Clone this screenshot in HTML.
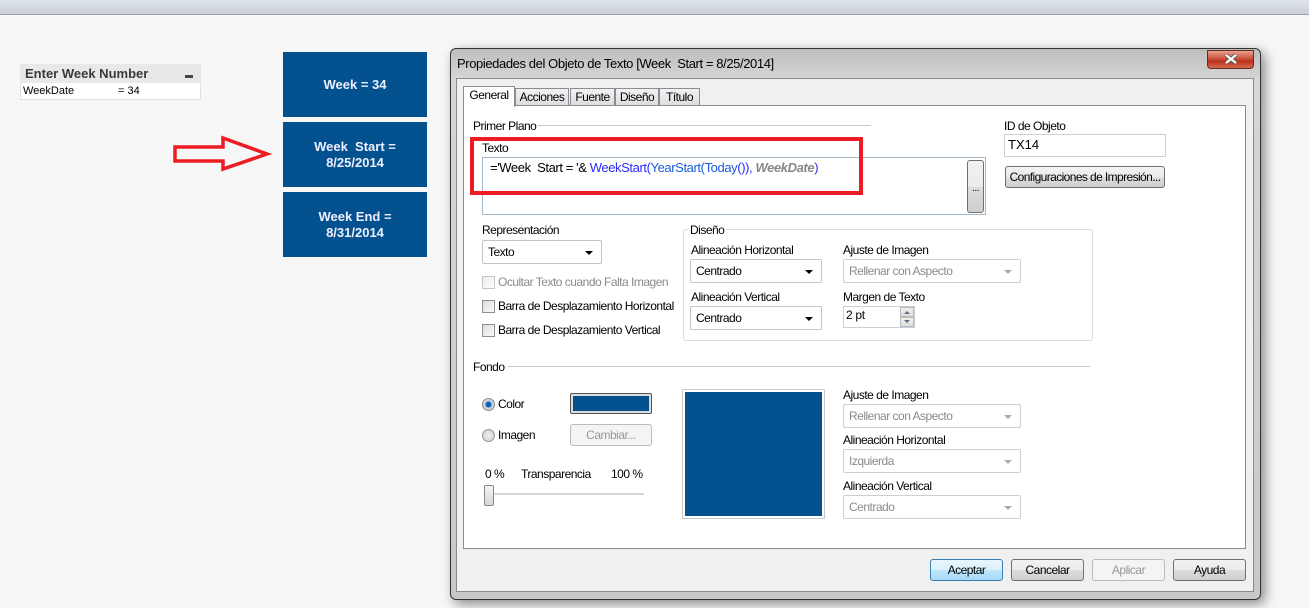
<!DOCTYPE html>
<html><head><meta charset="utf-8"><style>
*{box-sizing:border-box;margin:0;padding:0}
body{width:1309px;height:608px;position:relative;overflow:hidden;background:#f7f7f7;font-family:"Liberation Sans",sans-serif;font-size:12px;color:#000}
.a{position:absolute;white-space:nowrap}
.blue{position:absolute;left:283px;width:144px;height:65px;background:#03528f;color:#eef;font-weight:bold;font-size:13px;text-align:center;display:flex;align-items:center;justify-content:center;line-height:16px}
.t{position:absolute;white-space:nowrap;font-size:12px;letter-spacing:-0.5px;line-height:14px}
.sel{position:absolute;background:#fff;border:1px solid #c5c5c5;border-radius:2px;height:24px;padding:0 5px;line-height:22px;letter-spacing:-0.5px;white-space:nowrap}
.sel:after{content:"";position:absolute;right:8px;top:10px;border-left:4px solid transparent;border-right:4px solid transparent;border-top:4px solid #000}
.dis{color:#8a8a8a;border-color:#cfcfcf}
.dis:after{border-top-color:#aaa}
.btn{position:absolute;height:22px;border:1px solid #707070;border-radius:3px;background:linear-gradient(#f2f2f2,#ebebeb 50%,#dddddd 51%,#cfcfcf);text-align:center;line-height:20px;letter-spacing:-0.5px;white-space:nowrap;overflow:hidden}
.cb{position:absolute;width:13px;height:13px;border:1px solid #8e8f8f;background:linear-gradient(135deg,#dcdcdc,#fafafa)}
.tab{position:absolute;top:88px;height:18px;border:1px solid #898c95;border-bottom:none;background:linear-gradient(#f2f2f2,#dcdcdc);text-align:center;line-height:17px;letter-spacing:-0.5px}
</style></head><body>
<div class="a" style="left:0;top:0;width:1309px;height:15px;background:linear-gradient(#dfe4ea,#c9d0d8);border-bottom:1px solid #a0a4a8"></div>

<div class="a" style="left:20px;top:64px;width:181px;height:36px;border:1px solid #e0e0e0;background:#fff"></div>
<div class="a" style="left:20px;top:64px;width:181px;height:19px;background:#e8e8e8"></div>
<div class="a" style="left:25px;top:66px;font-weight:bold;font-size:13px;color:#3a3a3a">Enter Week Number</div>
<div class="a" style="left:185px;top:75px;width:8px;height:3px;background:#444"></div>
<div class="a" style="left:23px;top:85px;font-size:11px">WeekDate</div>
<div class="a" style="left:118px;top:85px;font-size:11px">= 34</div>

<div class="blue" style="top:52px">Week = 34</div>
<div class="blue" style="top:122px">Week&nbsp; Start =<br>8/25/2014</div>
<div class="blue" style="top:192px">Week End =<br>8/31/2014</div>

<svg class="a" style="left:170px;top:133px" width="105" height="42"><polygon points="5,14 53,14 53,5 97,21 53,36 53,28 5,28" fill="none" stroke="#ed1c24" stroke-width="3.5"/></svg>

<div class="a" style="left:450px;top:48px;width:811px;height:552px;border:1px solid #333;border-radius:6px;background:linear-gradient(#bdbdbd,#d6d6d6 30px,#c8c8c8);box-shadow:4px 4px 12px rgba(0,0,0,.45)"></div>
<div class="a" style="left:457px;top:56px;font-size:13px;letter-spacing:-0.4px">Propiedades del Objeto de Texto [Week&nbsp; Start = 8/25/2014]</div>
<div class="a" style="left:1207px;top:50px;width:47px;height:19px;border:1px solid #6b2a20;border-radius:0 0 4px 4px;background:linear-gradient(#e9a294,#c9472f 50%,#b9301b 60%,#d86a4e)"></div>
<svg class="a" style="left:1223px;top:53px" width="16" height="12"><path d="M3 2L13 10M13 2L3 10" stroke="#555" stroke-width="4"/><path d="M3 2L13 10M13 2L3 10" stroke="#fff" stroke-width="2.2"/></svg>
<div class="a" style="left:456px;top:78px;width:798px;height:514px;background:#f0f0f0;border:1px solid #8b8b8b"></div>

<div class="tab" style="left:515px;width:54px">Acciones</div>
<div class="tab" style="left:570px;width:45px">Fuente</div>
<div class="tab" style="left:615px;width:44px">Diseño</div>
<div class="tab" style="left:659px;width:41px">Título</div>
<div class="a" style="left:463px;top:105px;width:783px;height:444px;background:#fff;border:1px solid #898c95"></div>
<div class="tab" style="left:463px;top:86px;width:52px;height:21px;background:#fff;z-index:2">General</div>

<div class="t" style="left:473px;top:119px">Primer Plano</div>
<div class="a" style="left:538px;top:125px;width:333px;height:1px;background:#c8c8c8"></div>
<div class="t" style="left:482px;top:141px">Texto</div>
<div class="a" style="left:482px;top:157px;width:504px;height:58px;border:1px solid #a8b7c8;background:#fff"></div>
<div class="t" style="left:490px;top:161px;font-size:13px;letter-spacing:-0.4px">='Week&nbsp; Start = '&amp; <span style="color:#2a2aff">WeekStart(</span><span style="color:#1b5bd6">YearStart(Today</span><span style="color:#2a2aff">()),</span> <i style="color:#888;font-weight:bold">WeekDate</i><span style="color:#2a2aff">)</span></div>
<div class="btn" style="left:967px;top:160px;width:17px;height:53px;line-height:56px;font-size:10px">...</div>
<div class="a" style="left:470px;top:137px;width:393px;height:58px;border:4px solid #ed1c24"></div>

<div class="t" style="left:1004px;top:119px">ID de Objeto</div>
<div class="a" style="left:1004px;top:134px;width:162px;height:23px;border:1px solid #c8d0d8;background:#fff;padding:2px 3px;font-size:13px">TX14</div>
<div class="btn" style="left:1005px;top:166px;width:160px;font-size:12px;letter-spacing:-0.6px">Configuraciones de Impresión...</div>

<div class="t" style="left:482px;top:223px">Representación</div>
<div class="sel" style="left:482px;top:240px;width:120px">Texto</div>
<div class="cb" style="left:482px;top:276px;opacity:.5"></div><div class="t" style="left:498px;top:275px;color:#8a8a8a">Ocultar Texto cuando Falta Imagen</div>
<div class="cb" style="left:482px;top:300px"></div><div class="t" style="left:498px;top:299px">Barra de Desplazamiento Horizontal</div>
<div class="cb" style="left:482px;top:324px"></div><div class="t" style="left:498px;top:323px">Barra de Desplazamiento Vertical</div>

<div class="a" style="left:683px;top:229px;width:410px;height:112px;border:1px solid #d5dfe5;border-radius:3px"></div>
<div class="t" style="left:688px;top:223px;background:#fff;padding:0 2px">Diseño</div>
<div class="t" style="left:691px;top:243px">Alineación Horizontal</div>
<div class="sel" style="left:690px;top:259px;width:132px">Centrado</div>
<div class="t" style="left:843px;top:243px">Ajuste de Imagen</div>
<div class="sel dis" style="left:843px;top:259px;width:178px">Rellenar con Aspecto</div>
<div class="t" style="left:691px;top:290px">Alineación Vertical</div>
<div class="sel" style="left:690px;top:306px;width:132px">Centrado</div>
<div class="t" style="left:843px;top:290px">Margen de Texto</div>
<div class="a" style="left:843px;top:306px;width:72px;height:22px;border:1px solid #c8d0d8;background:#fff;padding:1px 2px;letter-spacing:-0.3px">2 pt</div>
<div class="a" style="left:900px;top:307px;width:14px;height:10px;border:1px solid #bbb;background:linear-gradient(#f0f0f0,#dcdcdc)"></div>
<div class="a" style="left:900px;top:317px;width:14px;height:10px;border:1px solid #bbb;background:linear-gradient(#f0f0f0,#dcdcdc)"></div>
<svg class="a" style="left:900px;top:307px" width="14" height="20"><path d="M4 7L7 4L10 7Z M4 13L7 16L10 13Z" fill="#5a6e8a"/></svg>

<div class="t" style="left:473px;top:360px">Fondo</div>
<div class="a" style="left:508px;top:366px;width:582px;height:1px;background:#c8c8c8"></div>
<div class="a" style="left:482px;top:398px;width:13px;height:13px;border-radius:50%;border:1px solid #888;background:radial-gradient(#0a63b0 30%,#bcd 45%,#eee)"></div>
<div class="t" style="left:498px;top:397px">Color</div>
<div class="a" style="left:570px;top:393px;width:82px;height:21px;border:1px solid #555;border-radius:2px;background:#dcdcdc;padding:2px"><div style="width:100%;height:100%;background:#03528f"></div></div>
<div class="a" style="left:482px;top:429px;width:13px;height:13px;border-radius:50%;border:1px solid #999;background:radial-gradient(#eee,#ccc)"></div>
<div class="t" style="left:498px;top:428px">Imagen</div>
<div class="btn" style="left:570px;top:424px;width:82px;color:#999;border-color:#bbb;background:#f4f4f4">Cambiar...</div>
<div class="t" style="left:485px;top:467px">0 %</div>
<div class="t" style="left:521px;top:467px">Transparencia</div>
<div class="t" style="left:611px;top:467px">100 %</div>
<div class="a" style="left:485px;top:493px;width:159px;height:2px;background:#d6d6d6"></div>
<div class="a" style="left:484px;top:485px;width:10px;height:21px;border:1px solid #888;border-radius:2px;background:linear-gradient(#f4f4f4,#d8d8d8)"></div>

<div class="a" style="left:682px;top:389px;width:143px;height:130px;border:1px solid #c8c8c8;padding:2px"><div style="width:100%;height:100%;background:#03528f"></div></div>
<div class="t" style="left:843px;top:388px">Ajuste de Imagen</div>
<div class="sel dis" style="left:843px;top:404px;width:178px">Rellenar con Aspecto</div>
<div class="t" style="left:843px;top:433px">Alineación Horizontal</div>
<div class="sel dis" style="left:843px;top:449px;width:178px">Izquierda</div>
<div class="t" style="left:843px;top:479px">Alineación Vertical</div>
<div class="sel dis" style="left:843px;top:495px;width:178px">Centrado</div>

<div class="btn" style="left:930px;top:559px;width:73px;border-color:#3c7fb1;background:linear-gradient(#eaf6fd,#d9f0fc 50%,#bee6fd 51%,#a7d9f5)">Aceptar</div>
<div class="btn" style="left:1011px;top:559px;width:73px">Cancelar</div>
<div class="btn" style="left:1092px;top:559px;width:73px;color:#999;border-color:#bbb;background:#f4f4f4">Aplicar</div>
<div class="btn" style="left:1173px;top:559px;width:73px">Ayuda</div>
</body></html>
